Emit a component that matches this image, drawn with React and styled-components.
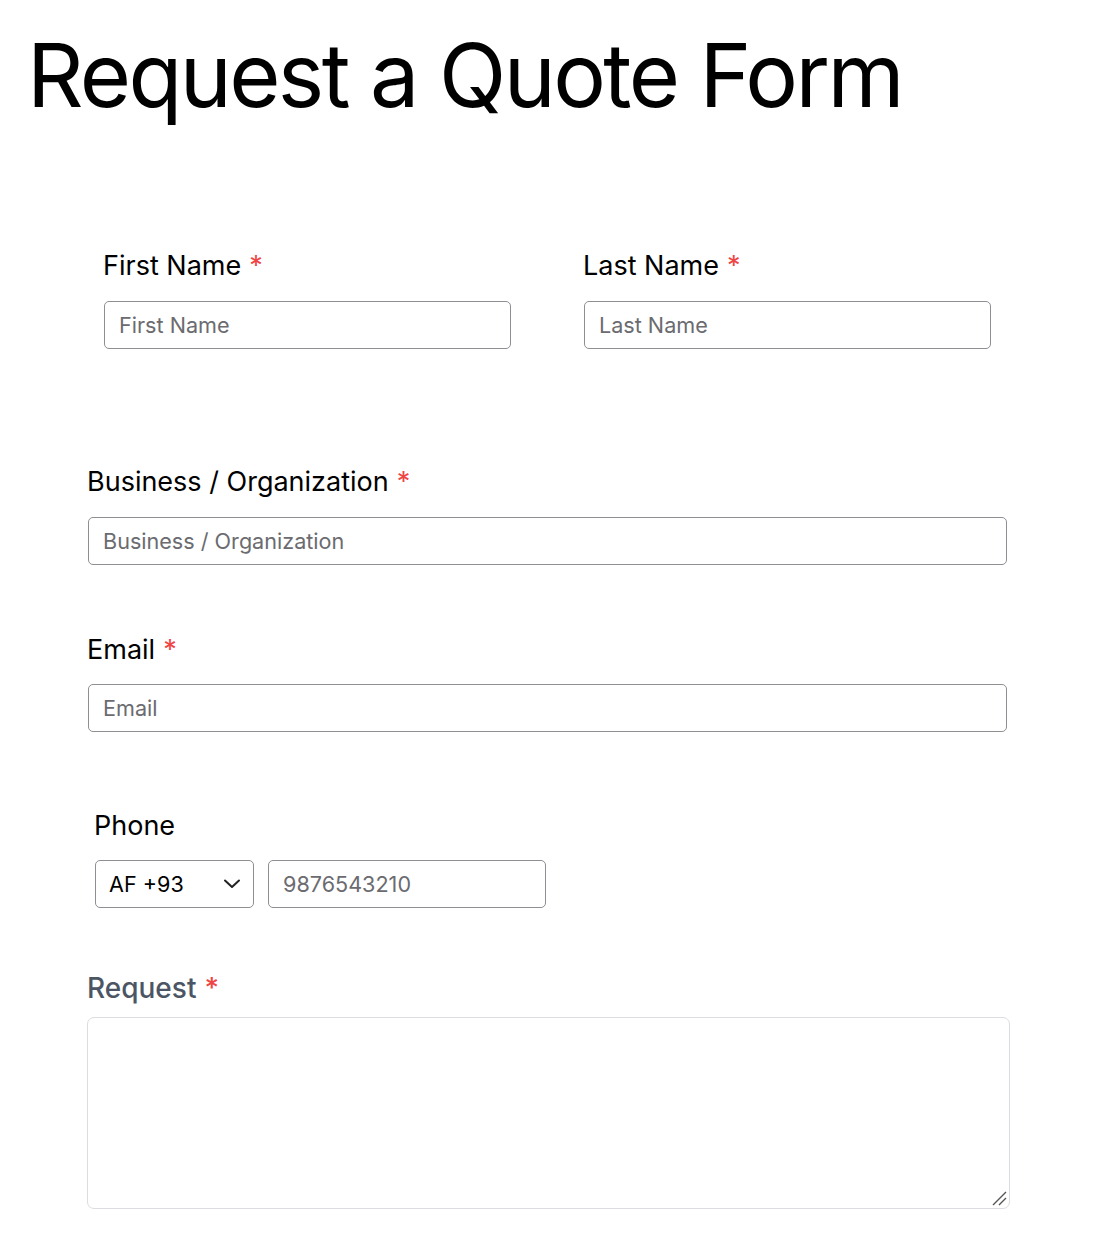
import React from "react";
import styled, { createGlobalStyle } from "styled-components";

const Global = createGlobalStyle`
  * { box-sizing: border-box; }
  body { margin: 0; background: #fff; font-family: Inter, "Noto Sans", sans-serif; color: #000; }
`;

const Page = styled.div`
  padding: 22px 0 40px 0;
`;

const Title = styled.h1`
  margin: 0 0 0 27px;
  font-size: 88px;
  line-height: 106px;
  font-weight: 400;
  letter-spacing: -2.6px;
`;

const Form = styled.form`
  margin: 0 0 0 88px;
  width: 919px;
  display: flex;
  flex-direction: column;
`;

const Section = styled.div`
  display: flex;
  flex-direction: column;
  gap: ${(p) => p.$gap ?? 18}px;
  margin-top: ${(p) => p.$top}px;
  padding-left: ${(p) => p.$indent ?? 0}px;
`;

const TwoCol = styled.div`
  display: grid;
  grid-template-columns: 1fr 1fr;
  column-gap: 73px;
  padding: 0 16px;
  margin-top: ${(p) => p.$top}px;
`;

const Label = styled.label`
  font-size: ${(p) => (p.$muted ? 28 : 27)}px;
  line-height: 34px;
  font-weight: ${(p) => (p.$muted ? 500 : 400)};
  color: ${(p) => (p.$muted ? "#4b5563" : "#000")};
  margin-left: -1px;
  display: block;
`;

const Star = styled.span`
  color: #ef4444;
  margin-left: 8px;
`;

const Input = styled.input`
  display: block;
  width: ${(p) => p.$w ?? "100%"};
  height: 48px;
  border: 1px solid #8e8e93;
  border-radius: 5px;
  padding: 0 14px;
  font-family: Inter, "Noto Sans", sans-serif;
  font-size: 21.6px;
  color: #000;
  background: #fff;
  outline: none;
  &::placeholder { color: #6b6b70; }
`;

const PhoneRow = styled.div`
  display: flex;
  gap: 14px;
`;

const Select = styled.div`
  width: 159px;
  height: 48px;
  border: 1px solid #8e8e93;
  border-radius: 5px;
  padding: 0 12px 0 13px;
  display: flex;
  align-items: center;
  justify-content: space-between;
  font-size: 21.6px;
  color: #000;
`;

const TextArea = styled.div`
  margin-left: -1px;
  width: 923px;
  height: 192px;
  border: 1px solid #dcdde0;
  border-radius: 7px;
  position: relative;
`;

const Grip = styled.svg`
  position: absolute;
  right: 1px;
  bottom: 1px;
`;

const Field = ({ label, required, placeholder, muted, top, gap }) => (
  <Section $top={top} $gap={gap}>
    <Label $muted={muted}>
      {label}
      {required && <Star>*</Star>}
    </Label>
    <Input placeholder={placeholder} />
  </Section>
);

export default function App() {
  return (
    <>
      <Global />
      <Page>
        <Title>Request a Quote Form</Title>
        <Form onSubmit={(e) => e.preventDefault()}>
          <TwoCol $top={121}>
            <Section $top={0}>
              <Label>
                First Name<Star>*</Star>
              </Label>
              <Input placeholder="First Name" />
            </Section>
            <Section $top={0}>
              <Label>
                Last Name<Star>*</Star>
              </Label>
              <Input placeholder="Last Name" />
            </Section>
          </TwoCol>
          <Field top={116} label="Business / Organization" required placeholder="Business / Organization" />
          <Field top={68} gap={17} label="Email" required placeholder="Email" />
          <Section $top={77} $gap={17} $indent={7}>
            <Label>Phone</Label>
            <PhoneRow>
              <Select>
                <span>AF +93</span>
                <svg width="18" height="12" viewBox="0 0 18 12">
                  <path d="M2 2.5 L9 9 L16 2.5" fill="none" stroke="#222" strokeWidth="2" strokeLinecap="round" strokeLinejoin="round" />
                </svg>
              </Select>
              <Input $w="278px" placeholder="9876543210" />
            </PhoneRow>
          </Section>
          <Section $top={63} $gap={12}>
            <Label $muted>
              Request<Star>*</Star>
            </Label>
            <TextArea>
              <Grip width="18" height="18" viewBox="0 0 18 18">
                <path d="M3 16 L16 3 M9 16 L16 9" stroke="#555" strokeWidth="1.4" />
              </Grip>
            </TextArea>
          </Section>
        </Form>
      </Page>
    </>
  );
}
